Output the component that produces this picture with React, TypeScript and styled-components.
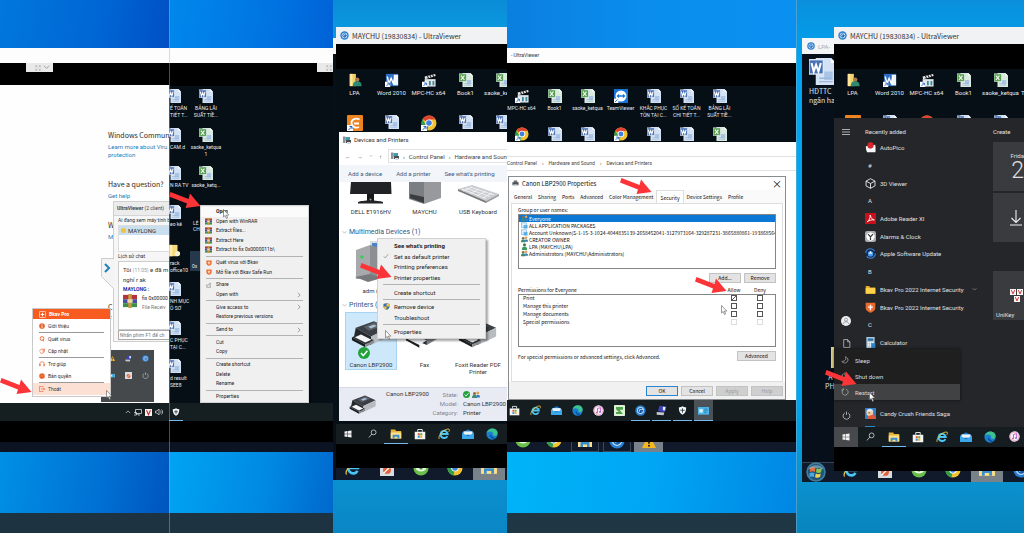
import React from 'react';
import styled, { createGlobalStyle, css } from 'styled-components';

const ui = 'Roboto, "Noto Sans", sans-serif';
const narrow = '"Noto Sans CJK JP", "Liberation Sans", sans-serif';

const Global = createGlobalStyle`
  *, *::before, *::after { box-sizing: border-box; }
  body { margin: 0; background: #0a86d0; font-family: ${ui}; font-size: 5px; line-height: 7px; }
  button, input { font: inherit; color: inherit; margin: 0; }
  button { border: 0; padding: 0; background: none; text-align: left; }
  a { color: inherit; text-decoration: none; }
  h2, h3, p, ul { margin: 0; padding: 0; font-weight: 400; font-size: inherit; list-style: none; }
  svg { display: block; flex: none; }
`;

/* ---------- icons ---------- */

const Sheet = ({ mark, color, tint }: { mark: string; color: string; tint: string }) => (
  <>
    <path d="M4 0h9l3 3v13H4z" fill={tint} />
    <path d="M13 0v3h3z" fill="#fff" />
    <path d="M9 8h5v5H9z" fill="#a9c4e4" /><path d="M6 12h7M6 14h8" stroke="#9cb8dc" strokeWidth=".8" />
    <rect x="0" y="1" width="8.500" height="8.500" fill={color} stroke="#dfe9f5" strokeWidth=".8" />
    <path d={mark} stroke="#fff" strokeWidth="1.200" fill="none" />
  </>
);
const W = 'M1.500 3l1.300 5L4.200 4l1.400 4L7 3';
const X = 'M2.200 3l4 5M6.200 3l-4 5';

const shapes: Record<string, React.ReactNode> = {
  word: <Sheet mark={W} color="#4a72b4" tint="#d3e2f4" />,
  excel: <Sheet mark={X} color="#55a04c" tint="#d9ebdf" />,
  wordApp: (
    <>
      <rect x="1" y="1" width="14" height="14" fill="#2d6cc0" />
      <rect x="10" y="2" width="5" height="12" fill="#eef4fb" />
      <path d="M2.500 4l2 8L7 6l2.500 6 2-8" stroke="#fff" strokeWidth="1.600" fill="none" />
      <path d="M0 10h6v6H0z" fill="#fff" /><path d="M1.500 15l3-3M2.500 11.500h2.500V14" stroke="#2060c0" fill="none" />
    </>
  ),
  clapper: (
    <>
      <path d="M3 4l12-3 .6 2.500L3.500 7z" fill="#e8e8e8" />
      <path d="M6 3l1.500 3M9 2.300l1.500 3M12 1.500l1.500 3" stroke="#222" strokeWidth="1.200" />
      <rect x="3" y="7" width="12.500" height="8.500" fill="#dfe5e8" />
      <path d="M8 9h2v5H8zM12 9h2v5h-2z" fill="#3f8a95" />
      <path d="M0 10h6v6H0z" fill="#fff" /><path d="M1.500 15l3-3M2.500 11.500h2.500V14" stroke="#2060c0" fill="none" />
    </>
  ),
  person: (
    <>
      <path d="M2 1h7v14H2z" fill="#f2d269" /><path d="M2 1h3v14H2z" fill="#ffe79a" />
      <circle cx="10.500" cy="7.500" r="2.500" fill="#b07a50" />
      <path d="M5.500 15c0-4 2-5.500 5-5.500s5 1.500 5 5.500z" fill="#2f8a72" />
    </>
  ),
  chrome: (
    <>
      <circle cx="8" cy="8" r="7.500" fill="#f2c230" />
      <path d="M8 8L1.500 4.200A7.500 7.500 0 0 1 14.600 4.500H8z" fill="#dd4434" />
      <path d="M8 8l-1.500 7.400A7.500 7.500 0 0 1 1.500 4.200L5 10z" fill="#2f9e4f" />
      <circle cx="8" cy="8" r="3.600" fill="#fff" /><circle cx="8" cy="8" r="2.800" fill="#3f7fe0" />
    </>
  ),
  chromeLink: (
    <>
      <circle cx="8" cy="8" r="7.500" fill="#f2c230" />
      <path d="M8 8L1.500 4.200A7.500 7.500 0 0 1 14.600 4.500H8z" fill="#dd4434" />
      <path d="M8 8l-1.500 7.400A7.500 7.500 0 0 1 1.500 4.200L5 10z" fill="#2f9e4f" />
      <circle cx="8" cy="8" r="3.600" fill="#fff" /><circle cx="8" cy="8" r="2.800" fill="#3f7fe0" />
      <path d="M0 10h6v6H0z" fill="#fff" /><path d="M1.500 15l3-3M2.500 11.500h2.500V14" stroke="#2060c0" fill="none" />
    </>
  ),
  foxit: (
    <>
      <rect x="0" y="0" width="16" height="16" rx="1" fill="#ee8420" />
      <path d="M12.500 4.500C8 2 4 5 4.500 8.500S9 13.500 12 12M7 8.500h5" stroke="#fff" strokeWidth="1.800" fill="none" />
      <path d="M0 10h6v6H0z" fill="#fff" /><path d="M1.500 15l3-3M2.500 11.500h2.500V14" stroke="#2060c0" fill="none" />
    </>
  ),
  team: (
    <>
      <rect width="16" height="16" fill="#1674d8" /><circle cx="8" cy="8" r="6.300" fill="#fff" />
      <path d="M2.800 8l3-2.500v1.700h4.400V5.500l3 2.500-3 2.500V8.800H5.800v1.700z" fill="#1674d8" />
      <path d="M0 11h5v5H0z" fill="#fff" /><path d="M1 15l3-3" stroke="#2060c0" />
    </>
  ),
  ultra: (
    <>
      <circle cx="8" cy="8" r="7.500" fill="#2a7fd0" /><circle cx="8" cy="8" r="5" fill="#bfe0fa" />
      <path d="M10.500 6.200a3 3 0 1 0 0 3.600H8V8h4" stroke="#1658a8" strokeWidth="1.500" fill="none" />
    </>
  ),
  folder: (
    <><path d="M1 3h5l1.500 2H15v9H1z" fill="#e5ac2b" /><path d="M1 6h14v8H1z" fill="#ffd24a" /></>
  ),
  yellow: (
    <><path d="M2 1h10v13H2z" fill="#f5da7e" /><path d="M2 1h4v13H2z" fill="#ffeeb0" /><circle cx="12" cy="11" r="3" fill="#f7f0d8" /></>
  ),
  explorer: (
    <>
      <path d="M1 2h6l1 2h7v10H1z" fill="#e9b33a" /><path d="M1 6h14v8H1z" fill="#ffe08a" />
      <path d="M3.500 14v-5h9v5h-2.500v-2.500H6V14z" fill="#3b8ecb" />
    </>
  ),
  store: (
    <>
      <path d="M1 5h14v10H1z" fill="#f4f4f4" /><path d="M5 5V2h6v3" stroke="#f4f4f4" strokeWidth="1.200" fill="none" />
      <path d="M5 7h2.700v2.700H5z" fill="#e8502a" /><path d="M8.300 7H11v2.700H8.300z" fill="#6aac2a" />
      <path d="M5 10.300h2.700V13H5z" fill="#2b94d8" /><path d="M8.300 10.300H11V13H8.300z" fill="#f0b020" />
    </>
  ),
  ie: (
    <>
      <path d="M12.500 10.800A4.800 4.800 0 1 1 13 8H4" stroke="#4cc4f2" strokeWidth="2.600" fill="none" />
      <path d="M1.500 14.500C-1 10 11-1 15 1.800c.8.800-.1 2.500-.8 3.400" stroke="#f5c842" strokeWidth="1.200" fill="none" />
    </>
  ),
  mail: (
    <><path d="M0 6l8-4.500L16 6v8.500H0z" fill="#1a6fc0" /><path d="M2 4.500h12V9H2z" fill="#e8f4fc" /><path d="M0 6.500l8 4.500 8-4.500v8H0z" fill="#39a9ea" /></>
  ),
  edge: (
    <>
      <circle cx="8" cy="8" r="7.500" fill="#1b7fd0" />
      <path d="M1 6.500C2 2.500 5 .5 8.500.5c4.500 0 7 3 7 6 0 2.500-2 3.800-4 3.800-1.500 0-2.500-.6-2-1.600C10.500 7 8 4.800 5.500 4.800 3 4.800 1.500 6 1 6.500z" fill="#3cc48e" />
      <path d="M6 9c0 3 2.500 5 5.500 4.700" stroke="#0c4f9c" strokeWidth="2" fill="none" />
    </>
  ),
  itunes: (
    <><circle cx="8" cy="8" r="7.500" fill="#f3eef6" /><circle cx="8" cy="8" r="6.500" fill="none" stroke="#e58ab8" /><path d="M6.500 11V5l4.500-1v6" stroke="#c04ac0" strokeWidth="1.200" fill="none" /><circle cx="5.700" cy="11" r="1.300" fill="#e0507a" /><circle cx="10.200" cy="10" r="1.300" fill="#7a5ae0" /></>
  ),
  cut: (
    <><rect width="16" height="16" rx="1" fill="#dff0d8" /><path d="M3 3h10v4H8l5 6H3v-3h4L3 6z" fill="#4d9f4a" /></>
  ),
  laptop: (
    <><path d="M5 1l10 1-2 8-10-1z" fill="#3a44c0" /><path d="M10 2.500l4 .5-1 5-3-.4z" fill="#e8ecff" /><path d="M1 10l11 1-1 4-10-1z" fill="#c4c8d0" /></>
  ),
  shieldWhite: (
    <><path d="M8 .5c2 1.400 4 2 6.500 2C14.500 9 13 13 8 15.500 3 13 1.500 9 1.500 2.500c2.500 0 4.500-.6 6.500-2z" fill="#f4f6f8" /><path d="M8 4v8M4 7.500h8" stroke="#26343c" strokeWidth="1.500" /></>
  ),
  shieldOrange: (
    <><path d="M1 1h14v8c0 3-4 5.500-7 6.500C5 14.500 1 12 1 9z" fill="#ee6a2c" /><path d="M8 4v8M4.500 7.500h7" stroke="#fff" strokeWidth="2" /></>
  ),
  card: (
    <><rect x="0" y="3" width="16" height="11" fill="#4fb8ea" /><path d="M2 6h5v5H2z" fill="#d6f0fc" /><path d="M9 6h5M9 8.500h5M9 11h3" stroke="#1b6d9c" /></>
  ),
  coccoc: (
    <><circle cx="8" cy="8" r="7.500" fill="#6abf4b" /><ellipse cx="8" cy="8.500" rx="5" ry="3" fill="#e9f6df" /><circle cx="8" cy="8" r="1.600" fill="#3c8a2a" /></>
  ),
  snip: (
    <><rect width="16" height="16" fill="#d8dce0" /><circle cx="8" cy="9" r="4.500" fill="#e2613a" /><path d="M4 13l8-8" stroke="#fff" strokeWidth="1.500" /></>
  ),
  warn: (
    <><path d="M8 0l8 16H0z" fill="#f5b820" /><path d="M8 5v6" stroke="#222" strokeWidth="2" /><circle cx="8" cy="13.500" r="1.200" fill="#222" /></>
  ),
  windows: <path d="M1 3l6-1v5.500H1zM8 1.800L15 1v6.500H8zM1 8.500h6V14l-6-1zM8 8.500h7V15l-7-.8z" fill="#f2f2f2" />,
  search: <><circle cx="10" cy="6" r="4.300" fill="none" stroke="#d8dcde" strokeWidth="1.400" /><path d="M7 9l-5.500 6" stroke="#d8dcde" strokeWidth="1.400" /></>,
  winrar: (
    <>
      <rect x="0" y="1" width="16" height="5" fill="#b5343c" /><rect x="0" y="6" width="16" height="4.500" fill="#4450a4" />
      <rect x="0" y="10.500" width="16" height="4.500" fill="#3f8f4a" /><rect x="6" y="0" width="4" height="16" fill="#c79a44" /><rect x="5" y="6" width="6" height="4" fill="#efd9a0" />
    </>
  ),
  share: <path d="M2 6v8h10V9M5 10c0-4 3-5 7-5M9.500 2L13 5 9.500 8" stroke="#555" strokeWidth="1.200" fill="none" />,
  uac: (
    <><path d="M8 0l7 2v6c0 4-4 7-7 8-3-1-7-4-7-8V2z" fill="#2f6fcb" /><path d="M8 0l7 2v6H8zM1 8h7v8c-3-1-7-4-7-8z" fill="#f2c437" /></>
  ),
  printerSmall: (
    <><path d="M4 1h8v5H4z" fill="#6b7075" /><path d="M1 5h14v7H1z" fill="#4a4f55" /><path d="M3 10h10v4H3z" fill="#cfd6dc" /></>
  ),
  devices: (
    <><path d="M0 1h5v13H0z" fill="#8b9299" /><path d="M5 2h9v7H5z" fill="#3f9cb0" /><path d="M6 8h10v6H6z" fill="#4a4f55" /><path d="M8 12h7v4H8z" fill="#d5dce2" /></>
  ),
  group: (
    <>
      <circle cx="5" cy="5" r="3" fill="#8c6b42" /><path d="M0 14c0-5 2-6 5-6s5 1 5 6z" fill="#3c8d6c" />
      <circle cx="11.500" cy="4" r="3" fill="#d6a25c" /><path d="M8 13c0-4 1-5 4-5s4 1 4 5z" fill="#3b7cc0" />
    </>
  ),
  user: <><circle cx="8" cy="4" r="3.500" fill="#4c6f48" /><path d="M2 16c0-6 2-8 6-8s6 2 6 8z" fill="#3c9a5c" /></>,
  pkg: <><rect x="1" y="2" width="12" height="10" fill="#dff0fb" stroke="#3c8fd0" /><path d="M6 7h9v8H6z" fill="#5ab0e6" /></>,
  autopico: <><path d="M1 6l14-2v10H3z" fill="#eceff0" /><circle cx="8" cy="5" r="4.500" fill="#d8242c" /><path d="M1 8l7 3 7-5v9H3z" fill="#fafafa" /></>,
  cube: <path d="M8 1l6.500 3.500v7L8 15l-6.500-3.500v-7zM1.500 4.500L8 8l6.500-3.500M8 8v7" fill="none" stroke="#eee" strokeWidth="1.300" />,
  adobe: <><rect width="16" height="16" fill="#c8101c" /><path d="M3 13c3-2 5-6 4.500-10 1.500 5 3 6.500 6 7-4-.5-8 1-10.500 3z" fill="none" stroke="#fff" strokeWidth="1.300" /></>,
  clock: <><rect width="16" height="16" rx="3" fill="#a9adb0" /><circle cx="8" cy="8" r="6" fill="#fff" /><path d="M8 9V13M8 8.500L4.500 4.500M8 8.500l3.500-4" stroke="#333" strokeWidth="1.700" /></>,
  apple: <><circle cx="8" cy="8" r="7" fill="#102850" stroke="#3f86d8" strokeWidth="1.600" strokeDasharray="17 5" /><circle cx="8" cy="8.500" r="4" fill="#4a9ce8" /><path d="M8 4.500l2.500 4h-5z" fill="#e8f4ff" /></>,
  calc: <><rect x="2" y="0" width="12" height="16" fill="#aecbe0" /><rect x="4" y="2" width="8" height="3.500" fill="#2f6fa0" /><path d="M4 8h8M4 10.500h8M4 13h8" stroke="#fff" strokeWidth="1.300" strokeDasharray="2 1" /><rect x="9" y="9" width="6" height="7" fill="#2d86c8" /></>,
  candy: <><rect width="16" height="16" fill="#2f7fc4" /><circle cx="7" cy="7" r="5" fill="#f4c6a0" /><path d="M2 5c1-5 9-5 10 0z" fill="#e4e8f0" /><path d="M4 12l9-3 3 7H3z" fill="#e05a3a" /><circle cx="6" cy="7" r="1" fill="#333" /></>,
  doc: <path d="M3 1h7l4 4v10H3zM10 1v4h4" fill="none" stroke="#d6d6d6" strokeWidth="1.200" />,
  power: <path d="M5 3.500a6 6 0 1 0 6 0M8 1v6" fill="none" stroke="#d8d8d8" strokeWidth="1.300" />,
  restart: <path d="M4.500 3.500a6 6 0 1 0 5-1.200M4.500 0v4h-4" fill="none" stroke="#c8c8c8" strokeWidth="1.200" />,
  moon: <path d="M8.500 1.500c3 5 0 9-7 9.500 4 5 12 3 12.500-3C14 5 12 2.500 8.500 1.500z" fill="none" stroke="#c8c8c8" strokeWidth="1.200" />,
  avatar: <><circle cx="8" cy="8" r="8" fill="#eceeef" /><circle cx="8" cy="6" r="2.500" fill="none" stroke="#777" /><path d="M3.500 13c0-5 9-5 9 0" fill="none" stroke="#777" /></>,
  chevDown: <path d="M2 4l6 6 6-6" fill="none" stroke="#9a9a9a" strokeWidth="2" />,
  chevUp: <path d="M2 11l6-6 6 6" fill="none" stroke="#e0e4e6" strokeWidth="1.800" />,
  chevRight: <path d="M5 2l6 6-6 6" fill="none" stroke="#777" strokeWidth="1.800" />,
  expand: <path d="M2 2l4 4M14 2l-4 4M2 14l4-4M14 14l-4-4M2 6V2h4M10 2h4v4M2 10v4h4M10 14h4v-4" fill="none" stroke="#a4a4a4" strokeWidth="1.500" />,
  net: <path d="M3 3h12v8H3zM0 9h5v5H0M8 11v3h4" fill="none" stroke="#e0e4e6" strokeWidth="1.500" />,
  unikey: <><rect width="16" height="16" fill="#f5f5f5" /><path d="M3.500 3l4.500 10 4.500-10" fill="none" stroke="#cc2020" strokeWidth="2.400" /></>,
  sound: <path d="M1 6h3l4-4v12l-4-4H1zM10.500 5c2 2 2 4 0 6M13 3c3 3 3 7 0 10" fill="none" stroke="#e0e4e6" strokeWidth="1.400" />,
  info: <><circle cx="8" cy="8" r="7.500" fill="#e8622c" /><path d="M8 6.500V13M8 3v2" stroke="#fff" strokeWidth="2.200" /></>,
  scan: <><circle cx="8" cy="6.500" r="5" fill="none" stroke="#e8622c" strokeWidth="2.400" /><path d="M10 10l3 5" stroke="#e8622c" strokeWidth="2.400" /></>,
  update: <><path d="M2 9c-.5-6 8-8 11-4l1-3v6H9M14 8c0 6-8 8-11 4" fill="none" stroke="#e8622c" strokeWidth="2" /></>,
  help: <><path d="M2 10V8a6 6 0 0 1 12 0v2" fill="none" stroke="#e8622c" strokeWidth="1.800" /><path d="M1 8h3v6H1zM12 8h3v6h-3z" fill="#e8622c" /></>,
  seal: <><circle cx="8" cy="8" r="7" fill="#e8622c" stroke="#e8622c" strokeWidth="2" strokeDasharray="2 1.500" /><path d="M4 8h8" stroke="#f6b090" /></>,
  exit: <><path d="M11 3V1H1v14h10v-2" fill="none" stroke="#e8622c" strokeWidth="1.800" /><path d="M5 8h10M12 5l3 3-3 3" fill="none" stroke="#e8622c" strokeWidth="1.800" /></>,
  bkav: <><rect x="1" y="1" width="14" height="14" rx="2" fill="none" stroke="#fff" strokeWidth="1.500" /><path d="M8 4v8M4 8h8" stroke="#fff" strokeWidth="2.200" /></>,
  orb: (
    <>
      <circle cx="8" cy="8" r="7.800" fill="#3f7f9c" /><circle cx="8" cy="8" r="6.500" fill="#1d5578" />
      <path d="M3.500 4.800c1.500-.9 2.700-.8 4-.1L7 8c-1.300-.7-2.500-.7-4 .1z" fill="#e8693a" /><path d="M8.500 5c1.500.7 2.700.7 4.200-.1L12 8.200c-1.400.7-2.600.7-4 0z" fill="#8cc64c" />
      <path d="M2.800 9c1.500-.8 2.700-.8 4-.1l-.6 3.200c-1.200-.6-2.300-.5-3.400 0z" fill="#4aa8e4" /><path d="M7.800 9.200c1.400.7 2.600.7 4 0L11.200 12c-1.400.8-2.600.7-4 .1z" fill="#f6cf4a" />
      <path d="M2 6C3 1.500 13 1.500 14 6 10 4.500 6 4.500 2 6z" fill="#fff" opacity=".35" />
    </>
  ),
  check: <><circle cx="8" cy="8" r="8" fill="#23a23c" /><path d="M4 8l3 3.500L12.500 5" stroke="#fff" strokeWidth="2" fill="none" /></>,
  tick: <path d="M2 9l4 4 8-10" stroke="#555" strokeWidth="1.300" fill="none" />,
  down: <path d="M8 0v12M3.500 8L8 12.500 12.500 8M2 15h12" fill="none" stroke="#f0f0f0" strokeWidth="1.100" />,
};

const Icon = ({ name, size = 14 }: { name: string; size?: number }) => (
  <svg width={size} height={size} viewBox="0 0 16 16" aria-hidden="true">{shapes[name]}</svg>
);

const Printer = ({ size = 42 }: { size?: number }) => (
  <svg width={size} height={size * 0.75} viewBox="0 0 42 31" aria-hidden="true">
    <path d="M5 9L24 2l16 7-19 9z" fill="#3c4044" />
    <path d="M13 8l12-5 7 4-13 5z" fill="#596068" /><path d="M18 8l6-2.500 3 1.700-6 2.500z" fill="#a8c0d4" />
    <path d="M5 9l16 9v9L3 19z" fill="#26292c" /><path d="M21 18l19-9v9l-19 9z" fill="#b8bcc0" />
    <path d="M1 19l9-4 14 7-9 4.500z" fill="#2c2f33" /><path d="M4 19l6.500-3 11 5.500-6.500 3z" fill="#f4f6f8" />
    <path d="M1 19l14 7.500v3L1 22z" fill="#1c1e20" /><path d="M15 26.500l9-4.500v3l-9 4.500z" fill="#8a8e92" />
  </svg>
);
const Fax = () => (
  <svg width="40" height="30" viewBox="0 0 42 31" aria-hidden="true">
    <path d="M6 12L22 4l15 5-14 10z" fill="#3a3d42" /><path d="M24 5l12-4 5 12-8 8-4-3z" fill="#24272b" />
    <path d="M27 7l7-2 3 7-5 5z" fill="#596068" /><path d="M6 12l17 7v8L5 20z" fill="#2a2d31" />
    <path d="M23 19l10-6v8l-10 6z" fill="#7d8186" /><path d="M1 20l8-4 14 6-8 5z" fill="#eef1f4" /><path d="M1 20l14 7v3L1 22z" fill="#1c1e20" />
  </svg>
);
const Monitor = () => (
  <svg width="42" height="22" viewBox="0 0 42 22" aria-hidden="true">
    <path d="M1 0h40l.5 12H0z" fill="#202225" /><path d="M17 12h7v7h-7z" fill="#17181a" />
    <path d="M8 20c4-2 20-2 25 0v1.500H8z" fill="#222427" /><circle cx="20.500" cy="17.500" r="1" fill="#999" />
  </svg>
);
const Tower = () => (
  <svg width="32" height="22" viewBox="0 0 32 22" aria-hidden="true">
    <path d="M0 0h15v22L0 17z" fill="#7b7e82" /><path d="M15 0h17v16l-17 6z" fill="#97999d" /><path d="M1 12l14 3v6L1 16z" fill="#3a3c3f" />
  </svg>
);
const Keyboard = () => (
  <svg width="43" height="22" viewBox="0 -2 43 22" aria-hidden="true">
    <path d="M1 5l14-4 27 9-13 7z" fill="#c9cccf" /><path d="M1 5l28 12v2L1 7z" fill="#77797c" /><path d="M29 17l13-7v2l-13 7z" fill="#9c9ea0" />
    <path d="M5 5l24 9.500M9 4l24 8.700M13 3l24 8M6 7l9-4M13 9.500L22 5M20 12l9-5M26 14l9-5" stroke="#f2f3f4" strokeWidth=".9" />
  </svg>
);
const Server = () => (
  <svg width="34" height="44" viewBox="0 0 34 42" aria-hidden="true">
    <path d="M16 1h14v24H16z" fill="#d8dde2" /><path d="M18 3h7v9h-7zM26 3h6v9h-6z" fill="#4b83c4" />
    <path d="M2 10l14-5v34H2z" fill="#a7a9ac" /><path d="M16 5l10 3v30l-10 2z" fill="#8c8e91" />
    <path d="M1 37l15-3 12 4-14 4z" fill="#77797c" /><circle cx="8" cy="17" r="1.800" fill="#34d058" />
  </svg>
);

const ArrowSvg = styled.svg<{ $x: number; $y: number }>`
  position: absolute; left: ${p => p.$x}px; top: ${p => p.$y}px; z-index: 5;
`;
const Arrow = ({ x, y }: { x: number; y: number }) => (
  <ArrowSvg $x={x} $y={y} width="32" height="18" viewBox="0 0 32 18" aria-hidden="true">
    <path d="M1.500 0l18 7 1.500-5.500 10.500 12.500-15 2 1.500-4.500L0 4.500z" fill="#fb3438" />
  </ArrowSvg>
);
const Cursor = ({ x, y }: { x: number; y: number }) => (
  <ArrowSvg $x={x} $y={y} width="7" height="10" viewBox="0 0 7 10" aria-hidden="true">
    <path d="M.5.5v7.500l1.700-1.600 1.200 3 1.200-.5-1.200-2.800h2.400z" fill="#fff" stroke="#555" strokeWidth=".6" />
  </ArrowSvg>
);

/* ---------- frame of the collage ---------- */

const Collage = styled.main`
  display: grid; grid-template-columns: 169fr 164fr 174fr 289fr 228fr;
  min-height: 100vh; overflow: hidden;
`;
const Shot = styled.section<{ $bg?: string }>`
  position: relative; display: flex; flex-direction: column; min-width: 0; overflow: hidden;
  background: ${p => p.$bg || '#000'};
`;
const Band = styled.div<{ $h?: number; $bg: string }>`
  position: relative; flex: ${p => (p.$h ? 'none' : 1)}; height: ${p => (p.$h ? p.$h + 'px' : 'auto')};
  background: ${p => p.$bg}; overflow: hidden;
`;
const TitleBand = styled(Band)`
  display: flex; align-items: center; gap: 4px; padding: 0 4px; font-size: 5px; color: #333; white-space: pre;
`;
const DisplayTab = styled.div<{ $x: number }>`
  position: absolute; left: ${p => p.$x}px; top: 0; width: 27px; height: 9px; background: #e9e9e9;
  display: flex; align-items: center; gap: 2px; padding-left: 9px;
`;
const TrayBar = styled.div`
  flex: none; height: 18px; background: #151e20; display: flex; align-items: center; justify-content: flex-end; gap: 3px; padding-right: 6px;
`;
const TaskBar = styled.nav<{ $h?: number }>`
  flex: none; height: ${p => p.$h || 20}px; background: #161d20; display: flex; align-items: stretch;
`;
const TaskButton = styled.button<{ $open?: boolean; $active?: boolean; $wide?: boolean }>`
  ${p => (p.$wide ? css`flex: none; width: 19px;` : css`flex: none; width: 24px;`)}
  && { display: flex; align-items: center; justify-content: center;
  background: ${p => (p.$active ? '#4a5157' : 'transparent')};
  border-bottom: 1px solid ${p => (p.$open ? '#76b9ed' : 'transparent')}; }
`;
const HostStrip = styled.div<{ $h: number; $pitch: number }>`
  flex: none; height: ${p => p.$h}px; background: #101a2b; display: flex; overflow: hidden;
  > span { flex: none; width: ${p => p.$pitch}px; display: flex; align-items: flex-end; justify-content: center; padding-bottom: 4px; }
  > span.open { border: 1px solid #3a4759; border-top: 0; margin: 0 2px; width: ${p => p.$pitch - 3}px; padding-bottom: 2px; }
  > span.lit { background: #7a8289; margin: 0 1px; width: ${p => p.$pitch - 2}px; }
`;

/* ---------- desktop icons ---------- */

const IconRow = styled.div<{ $pitch: number; $x?: number; $y?: number; $large?: boolean }>`
  position: absolute; left: ${p => p.$x || 0}px; top: ${p => p.$y || 0}px; font-size: ${p => (p.$large ? 6 : 5)}px;
  display: grid; grid-auto-flow: column; grid-auto-columns: ${p => p.$pitch}px;
`;
const Shortcut = styled.div`
  display: flex; flex-direction: column; align-items: center; gap: 2px; color: #e9edf0; text-align: center;
  white-space: pre; line-height: 7px;
`;
const Item = ({ icon, label, size = 14 }: { icon?: string; label?: string; size?: number }) => (
  <Shortcut>{icon && <Icon name={icon} size={size} />}{label}</Shortcut>
);
const IconColumn = styled.div<{ $x: number; $cut?: boolean }>`
  position: absolute; top: 3px; left: ${p => p.$x}px; width: 34px;
  display: grid; grid-template-rows: repeat(8, 1fr); height: 309px;
  ${p => p.$cut && css`
    ${Shortcut} { align-items: flex-start; text-align: left; }
    svg { margin-left: -3px; }
  `}
`;

/* ---------- menus ---------- */

const Menu = styled.div<{ $x: number; $y: number; $w: number; $h: number; $gutter: number; $large?: boolean }>`
  position: absolute; left: ${p => p.$x}px; top: ${p => p.$y}px; width: ${p => p.$w}px; height: ${p => p.$h}px;
  font-size: ${p => (p.$large ? 6 : 5)}px;
  display: flex; flex-direction: column; padding: 1px 0; background: #f0f0f0; color: #1c1c1c; z-index: 2;
  border: 1px solid #d2d2d2; box-shadow: 2px 2px 2px rgba(0,0,0,.35);
  button { flex: 3; min-height: 0; display: grid; grid-template-columns: ${p => p.$gutter}px 1fr 12px; align-items: center; white-space: nowrap; }
  button > :first-child { justify-self: center; }
  hr { flex: 1; min-height: 0; width: calc(100% - 10px); margin: 0 5px; border: 0; background: linear-gradient(#b4b4b4, #b4b4b4) center / 100% 1px no-repeat; }
`;
const Hot = styled.span`
  display: contents;
  button { background: #fbfbfb; }
`;
const Entry = ({ icon, label, more, bold, size = 7 }: { icon?: string; label: string; more?: boolean; bold?: boolean; size?: number }) => (
  <button type="button">
    <span>{icon && <Icon name={icon} size={size} />}</span>
    {bold ? <b>{label}</b> : <span>{label}</span>}
    {more && <Icon name="chevRight" size={6} />}
  </button>
);

/* ---------- shot 1: exit Bkav ---------- */

const HelpPage = styled.div`
  padding: 44px 0 0 108px; color: #2b2b2b; font: 7px/12px ${narrow}; white-space: nowrap;
  a { display: block; color: #1b7fb8; font: 6px/8px ${ui}; margin: 2px 0 19px; }
`;
const LowerHelp = styled.div`margin-top: 60px; a { margin: 0; }`;
const ViewerPanel = styled.aside`
  position: absolute; left: 113px; right: 0; top: 116px; height: 141px; background: #f6f6f6; border: solid #cfcfcf; border-width: 1px 0 1px 1px;
  padding-left: 4px; color: #333; white-space: nowrap; overflow: hidden;
  h2 { margin-left: -4px; padding-left: 3px; line-height: 13px; background: #ececec; border-bottom: 1px solid #d5d5d5; color: #444; }
`;
const PanelLabel = styled.p`line-height: 9px;`;
const ClientList = styled.div`
  height: 27px; background: #fff; border: 1px solid #ddd; border-right: 0;
  div { display: flex; align-items: center; gap: 2px; padding-left: 2px; height: 9px; font-size: 6px; background: #c9dff0; }
  i { width: 5px; height: 5px; border-radius: 50%; background: #f0c23a; }
`;
const ChatLog = styled.div`
  height: 69px; background: #fff; border: 1px solid #ccc; border-right: 0; padding: 3px 0 0 4px; font-size: 6px; line-height: 9px;
  small { font-size: 5px; color: #999; } strong { color: #2b2ba0; font-size: 5px; }
`;
const FileLine = styled.div`display: flex; gap: 5px; font-size: 5px; div { color: #777; } p { color: #222; }`;
const ChatInput = styled.input`
  display: block; width: 100%; height: 10px; border: 1px solid #aaa; border-right: 0; border-radius: 0; padding: 0 1px; background: #fff;
  &::placeholder { color: #777; opacity: 1; }
`;
const DrawerTab = styled.button`
  && { position: absolute; left: 101px; top: 173px; z-index: 1; }
`;
const TrayPopup = styled.div`
  position: absolute; left: 101px; top: 265px; width: 53px; height: 52px; background: #46494b; padding: 0 0 18px 3px;
  display: grid; grid-template-columns: repeat(3, 1fr); align-items: center; justify-items: center;
`;
const BkavMenu = styled.div`
  position: absolute; left: 32px; top: 223px; width: 79px; background: #fff; border: 1px solid #c9c9c9; z-index: 2; color: #333; padding-bottom: 1px;
  h2, button { display: flex; align-items: center; gap: 3px; width: 100%; height: 12px; padding-left: 6px; }
  h2 { height: 10px; background: #f75b20; color: #fff; font-weight: 700; margin-bottom: 1px; }
  hr { margin: 0 6px; border: 0; height: 1px; background: #999; }
  button:last-child { background: #fde0d4; }
`;

const ShotOne = () => (
  <Shot>
    <Band $h={48} $bg="linear-gradient(100deg, #0078dc, #0065d4 60%, #0050c4)" />
    <Band $h={15} $bg="#fdfdfd" />
    <Band $h={22} $bg="#000"><DisplayTab $x={26}><Icon name="expand" size={6} /><Icon name="chevDown" size={7} /></DisplayTab></Band>
    <Band $h={318} $bg="#fefefe">
      <HelpPage>
        <p>Windows Community</p><a href="#virus">Learn more about Viru<br />protection</a>
        <p>Have a question?</p><a href="#help">Get help</a>
        <p>W</p><a href="#more">M</a>
        <LowerHelp><p>C</p><p>F</p><a href="#sec">L</a></LowerHelp>
      </HelpPage>
      <DrawerTab type="button" aria-label="Collapse">
        <svg width="13" height="42" viewBox="0 0 13 42"><path d="M13 .5H.5v18L13 31" fill="#f4f4f4" stroke="#ccc" /><path d="M4 6l4 4-4 4" stroke="#1f7fc0" strokeWidth="2" fill="none" /></svg>
      </DrawerTab>
      <ViewerPanel>
        <h2><b>UltraViewer</b> (2 client)</h2>
        <PanelLabel>Ai đang xem máy tính b</PanelLabel>
        <ClientList><div><i />MAYLONG</div></ClientList>
        <PanelLabel>Lịch sử chat</PanelLabel>
        <ChatLog>
          <p>Tôi <small>(11:05)</small> e đã m</p><p>nghỉ r ak</p><strong>MAYLONG :</strong>
          <FileLine><Icon name="winrar" size={14} /><div><p>fix 0x00000</p>File Receiv</div></FileLine>
        </ChatLog>
        <ChatInput aria-label="Chat" placeholder="Nhấn phím F1 để ch" />
      </ViewerPanel>
      <TrayPopup>
        <Icon name="warn" size={5} /><Icon name="laptop" size={7} /><Icon name="ultra" size={7} />
        <Icon name="card" size={5} /><Icon name="snip" size={7} /><Icon name="power" size={7} />
      </TrayPopup>
      <BkavMenu>
        <h2><Icon name="bkav" size={7} />Bkav Pro</h2>
        <button type="button"><Icon name="info" size={6} />Giới thiệu</button><hr />
        <button type="button"><Icon name="scan" size={6} />Quét virus</button>
        <button type="button"><Icon name="update" size={6} />Cập nhật</button><hr />
        <button type="button"><Icon name="help" size={6} />Trợ giúp</button>
        <button type="button"><Icon name="seal" size={6} />Bản quyền</button><hr />
        <button type="button"><Icon name="exit" size={6} />Thoát</button>
      </BkavMenu>
    </Band>
    <TrayBar><Icon name="chevUp" size={6} /><Icon name="net" size={8} /><Icon name="unikey" size={7} /><Icon name="sound" size={8} /></TrayBar>
    <Band $h={21} $bg="#000" />
    <Band $h={10} $bg="#0c1424" />
    <Band $h={61} $bg="linear-gradient(100deg, #0090e4, #0070d4 60%, #0055be)" />
    <Band $bg="#1d3342" />
    <Arrow x={0} y={378} /><Cursor x={106} y={390} />
  </Shot>
);

/* ---------- shot 2: extract ---------- */

const Selected = styled.div`
  position: absolute; left: 21px; top: 165px; width: 40px; height: 20px; background: #26384c; color: #dfe5ea; padding: 12px 0 0 2px;
`;
const Caption = styled.p`position: absolute; left: 24px; top: 134px; color: #dfe5ea; line-height: 6px;`;
const EdgeLine = styled.div`position: absolute; inset: 0 auto 0 0; width: 1px; background: rgba(150,180,205,.45); z-index: 4;`;
const Shield = styled.button`
  && { margin-right: auto; width: 14px; height: 18px; display: flex; align-items: center; justify-content: center; border-bottom: 1px solid #76b9ed; }
`;

const ShotTwo = () => (
  <Shot>
    <EdgeLine />
    <Band $h={48} $bg="linear-gradient(100deg, #0088ec, #0074e2 60%, #0062d6)" />
    <Band $h={15} $bg="#fdfdfd" />
    <Band $h={23} $bg="#000"><DisplayTab $x={148}><Icon name="expand" size={6} /></DisplayTab></Band>
    <Band $h={317} $bg="#060e16">
      <IconColumn $x={1} $cut>
        <Item icon="word" label={'Ế TOÁN\nTIẾT T...'} /><Item icon="word" label="CAM.d" /><Item icon="word" label="N RA TV" />
        <Item icon="word" label="eo kê" /><Item icon="yellow" label={'rack\noffice10'} /><Item icon="word" label={'NH MỤC\nỒ SƠ'} />
        <Item icon="word" label={'C PHỤC\nTẠI C...'} /><Item icon="word" label={'d result\nSEE8'} />
      </IconColumn>
      <IconColumn $x={20}>
        <Item icon="word" label={'BẢNG LÃI\nSUẤT TIỀ...'} /><Item icon="excel" label={'saoke_ketqua\n1'} /><Item icon="excel" label="saoke_ketq..." />
      </IconColumn>
      <Caption>LÊ<br />CH</Caption>
      <Selected>0x</Selected>
      <Menu $x={31} $y={119} $w={109} $h={198} $gutter={15}>
        <Hot><Entry label="Open" bold /></Hot><Entry icon="winrar" label="Open with WinRAR" /><Entry icon="winrar" label="Extract files..." />
        <Entry icon="winrar" label="Extract Here" /><Entry icon="winrar" label="Extract to fix 0x0000011b\" /><hr />
        <Entry icon="shieldOrange" size={6} label="Quét virus với Bkav" /><Entry icon="shieldOrange" size={6} label="Mở file với Bkav Safe Run" /><hr />
        <Entry icon="share" size={6} label="Share" /><Entry label="Open with" more /><hr />
        <Entry label="Give access to" more /><Entry label="Restore previous versions" /><hr />
        <Entry label="Send to" more /><hr />
        <Entry label="Cut" /><Entry label="Copy" /><hr />
        <Entry label="Create shortcut" /><Entry label="Delete" /><Entry label="Rename" /><hr />
        <Entry label="Properties" />
      </Menu>
    </Band>
    <TrayBar><Shield type="button" aria-label="Bkav"><Icon name="shieldWhite" size={8} /></Shield></TrayBar>
    <Band $h={21} $bg="#000" />
    <Band $h={10} $bg="#0c1424" />
    <Band $h={61} $bg="linear-gradient(100deg, #00a4f2, #0088e2 60%, #0068cc)" />
    <Band $bg="#1d3342" />
    <Arrow x={0} y={192} /><Cursor x={54} y={209} />
  </Shot>
);

/* ---------- shared viewer window (shots 3 and 5) ---------- */

const Viewer = styled.div<{ $x: number }>`
  position: relative; margin: 27px 0 0 ${p => p.$x}px; display: flex; flex-direction: column; background: #060e16;
`;
const ViewerTitle = styled.h2`
  && { height: 17px; background: #f1f2f3; display: flex; align-items: center; gap: 3px; padding-left: 4px; color: #333; font: 7px/8px ${narrow}; white-space: nowrap; }
`;
const FirstRow = () => (
  <>
    <Item icon="person" label="LPA" /><Item icon="wordApp" label="Word 2010" /><Item icon="clapper" label="MPC-HC x64" />
    <Item icon="excel" label="Book1" /><Item icon="excel" label="saoke_ketqua" />
  </>
);
const SecondRow = () => (
  <><Item icon="foxit" size={16} /><Item icon="word" /><Item icon="chromeLink" size={16} /><Item icon="word" /><Item icon="word" /></>
);
const BackWindow = styled.div<{ $x: number; $bottom: number }>`
  position: absolute; left: ${p => p.$x}px; top: 38px; right: 0; height: ${p => p.$bottom - 38}px; background: #07101a; color: #dfe5ea;
`;
const BackTitle = styled.div`
  height: 16px; background: #f4f5f6; display: flex; align-items: center; gap: 3px; padding-left: 5px; font-size: 6px; color: #a5a8ab;
`;

/* ---------- shot 3: printers ---------- */

const Explorer = styled.div`
  position: absolute; left: 3px; right: 0; top: 105px; height: 289px; background: #fff; color: #333; white-space: nowrap;
  display: flex; flex-direction: column; font-size: 6px;
`;
const ExTitle = styled.h2`&& { height: 15px; display: flex; align-items: center; gap: 3px; padding-left: 4px; }`;
const Address = styled.nav`
  height: 18px; display: flex; align-items: center; gap: 6px; padding-left: 6px; color: #555;
  > div { flex: 1; height: 14px; display: flex; align-items: center; gap: 4px; border: 1px solid #e3e3e3; border-right: 0; padding-left: 2px; color: #444; overflow: hidden; }
`;
const Commands = styled.div`
  height: 17px; display: flex; align-items: center; gap: 14px; padding-left: 9px; background: #f2f5f9; color: #3d5a80;
`;
const Devices = styled.div<{ $mb?: number }>`
  display: grid; grid-template-columns: 52px 55px 52px; justify-items: center; padding-left: 6px; text-align: center; white-space: pre;
  margin-bottom: ${p => p.$mb || 0}px;
`;
const Device = styled.button<{ $sel?: boolean; $h: number }>`
  && { position: relative; width: 100%; height: ${p => p.$h}px; display: flex; flex-direction: column; align-items: center; justify-content: flex-start; gap: 4px; text-align: center; white-space: pre;
  background: ${p => (p.$sel ? '#cce8fa' : 'none')}; box-shadow: ${p => (p.$sel ? 'inset 0 0 0 1px #a8d4f2' : 'none')}; padding-top: ${p => (p.$h > 55 ? 7 : 0)}px; }
`;
const DeviceBadge = styled.span`position: absolute; left: 13px; top: 35px;`;
const PrinterImg = styled.div`flex: none; height: 38px;`;
const GroupTitle = styled.h3`
  && { display: flex; align-items: center; gap: 2px; padding-left: 3px; height: 14px; font-size: 7px; color: #31597f; }
`;
const Details = styled.footer`
  margin-top: auto; height: 34px; background: #e8ebf3; display: flex; padding: 2px 0 0 10px; color: #333; border-top: 1px solid #d6dae4;
  > svg { margin: 4px 9px 0 0; }
  dl { margin: 0 0 0 auto; display: grid; grid-template-columns: auto 44px; grid-auto-rows: 9px; column-gap: 5px; align-items: center; }
  dt { text-align: right; color: #7b8797; } dd { margin: 0; display: flex; gap: 2px; }
`;

const ShotThree = () => (
  <Shot $bg="linear-gradient(180deg, #0a8cd6, #0a9ae0 6%, #0a90d0 90%, #0a86c4)">
    <BackWindow $x={0} $bottom={480}><BackTitle /></BackWindow>
    <Viewer $x={3}>
      <ViewerTitle><Icon name="ultra" size={9} />MAYCHU (19830834) - UltraViewer</ViewerTitle>
      <Band $h={25} $bg="#000" />
      <Band $h={355} $bg="#060e16">
        <IconRow $x={0} $y={4} $pitch={37} $large><FirstRow /></IconRow>
        <IconRow $x={0} $y={46} $pitch={37}><SecondRow /></IconRow>
      </Band>
      <Explorer>
        <ExTitle><Icon name="devices" size={8} />Devices and Printers</ExTitle>
        <Address>
          <span>←</span><span>→</span><Icon name="chevDown" size={4} /><span>↑</span>
          <div><Icon name="devices" size={8} /><span>›</span><a href="#cp">Control Panel</a><span>›</span><a href="#hs">Hardware and Soun</a></div>
        </Address>
        <Commands><button type="button">Add a device</button><button type="button">Add a printer</button><button type="button">See what's printing</button></Commands>
        <Devices $mb={-1}>
          <Device type="button" $h={44}><Monitor />DELL E1916HV</Device>
          <Device type="button" $h={44}><Tower />MAYCHU</Device>
          <Device type="button" $h={44}><Keyboard />USB Keyboard</Device>
        </Devices>
        <GroupTitle><Icon name="chevDown" size={5} />Multimedia Devices (1)</GroupTitle>
        <Devices $mb={5}><Device type="button" $h={54}><Server />adm (l</Device></Devices>
        <GroupTitle><Icon name="chevDown" size={5} />Printers (</GroupTitle>
        <Devices>
          <Device type="button" $sel $h={58}><PrinterImg><Printer size={40} /></PrinterImg>Canon LBP2900<DeviceBadge><Icon name="check" size={12} /></DeviceBadge></Device>
          <Device type="button" $h={58}><PrinterImg><Fax /></PrinterImg>Fax</Device>
          <Device type="button" $h={58}><PrinterImg><Printer size={40} /></PrinterImg>{'Foxit Reader PDF\nPrinter'}</Device>
        </Devices>
        <Details>
          <Printer size={28} />
          <span>Canon LBP2900</span>
          <dl><dt>State:</dt><dd><Icon name="check" size={7} /><Icon name="group" size={8} /></dd><dt>Model:</dt><dd>Canon LBP2900</dd><dt>Category:</dt><dd>Printer</dd></dl>
        </Details>
      </Explorer>
      <TaskBar>
        <TaskButton type="button" aria-label="Start"><Icon name="windows" size={8} /></TaskButton><TaskButton type="button" aria-label="Search"><Icon name="search" size={9} /></TaskButton>
        <TaskButton type="button" aria-label="Explorer" $open><Icon name="explorer" size={12} /></TaskButton><TaskButton type="button" aria-label="Store"><Icon name="store" size={12} /></TaskButton>
        <TaskButton type="button" aria-label="Internet"><Icon name="ie" size={12} /></TaskButton><TaskButton type="button" aria-label="Mail"><Icon name="mail" size={12} /></TaskButton>
        <TaskButton type="button" aria-label="Edge"><Icon name="edge" size={12} /></TaskButton>
      </TaskBar>
      <Band $h={24} $bg="#000" />
      <HostStrip $h={12} $pitch={34}><span><Icon name="ie" size={16} /></span><span><Icon name="snip" size={14} /></span><span><Icon name="coccoc" size={16} /></span><span><Icon name="chrome" size={16} /></span><span className="lit"><Icon name="explorer" size={18} /></span></HostStrip>
    </Viewer>
    <Menu $x={44} $y={238} $w={109} $h={101} $gutter={16} $large>
      <Entry label="See what's printing" bold />
      <Entry icon="tick" size={6} label="Set as default printer" />
      <Entry label="Printing preferences" /><Entry label="Printer properties" /><hr />
      <Entry label="Create shortcut" /><hr />
      <Entry icon="uac" label="Remove device" /><Entry label="Troubleshoot" /><hr />
      <Entry label="Properties" />
    </Menu>
    <Arrow x={27} y={263} /><Cursor x={52} y={330} />
  </Shot>
);

/* ---------- shot 4: printer security ---------- */

const Crumbs = styled.nav`
  height: 15px; margin-top: 14px; border: solid #e2e2e2; border-width: 1px 0; display: flex; align-items: center; gap: 5px; color: #444;
`;
const Backdrop = styled.div`position: absolute; inset: 56px 0 0 0; background: #fff; white-space: nowrap;`;
const Dialog = styled.form`
  position: absolute; left: 1px; right: 10px; top: 90px; background: #fff; border: 1px solid #8a8d90; font-family: ${narrow}; font-size: 5px; color: #111; white-space: nowrap;
`;
const DialogTitle = styled.header`
  display: flex; align-items: center; gap: 3px; height: 13px; padding: 0 3px; font-family: ${narrow}; font-size: 6px;
  button { margin-left: auto; font-size: 10px; }
`;
const Tabs = styled.div`display: flex; height: 13px; padding-left: 2px; background: #fafafa;`;
const Tab = styled.button<{ $on?: boolean }>`
  && { padding: 0 3px; border: 0 solid #ddd; background: ${p => (p.$on ? '#fff' : 'none')}; ${p => p.$on && css`border-width: 1px 1px 0;`} }
`;
const Page = styled.div`margin: 0 2px; border: 1px solid #dedede; padding: 2px 6px 18px; height: 179px;`;
const Names = styled.ul`
  && { height: 55px; border: 1px solid #858585; margin-top: 1px; overflow: hidden; }
`;
const Name = styled.li<{ $on?: boolean }>`
  display: flex; align-items: center; gap: 1px; height: 7px; padding-left: 2px;
  background: ${p => (p.$on ? '#0a78d4' : 'none')}; color: ${p => (p.$on ? '#fff' : 'inherit')};
`;
const Actions = styled.div<{ $top: number }>`display: flex; justify-content: flex-end; align-items: center; gap: 3px; margin-top: ${p => p.$top}px; p { margin-right: auto; }`;
const Push = styled.button<{ $w?: number; $primary?: boolean }>`
  && { width: ${p => p.$w || 32}px; height: 10px; text-align: center; line-height: 8px; background: #e3e3e3; border: 1px solid ${p => (p.$primary ? '#2a84d0' : '#c3c3c3')}; }
  &&:disabled { color: #9c9c9c; background: #cfcfcf; }
`;
const Permissions = styled.table`
  width: 100%; margin-top: 3px; border-collapse: collapse; line-height: 8px;
  th, td { padding: 0; font-weight: 400; text-align: center; height: 8px; width: 26px; }
  th:first-child, td:first-child { text-align: left; width: auto; padding-left: 5px; } thead th:first-child { padding-left: 0; }
  th:last-child, td:last-child { width: 29px; padding-right: 3px; }
  tbody { outline: 1px solid #858585; outline-offset: -1px; }
  input { appearance: none; display: block; margin: 0 auto; width: 6px; height: 6px; border: 1px solid #555; background: #fff; }
  input:checked { background: linear-gradient(135deg, #fff 40%, #555 50%, #fff 60%); }
  input:disabled { border-color: #ddd; }
  tr.fill td { height: 21px; }
`;
const DialogFooter = styled.footer`height: 17px; display: flex; align-items: center; justify-content: flex-end; gap: 3px; padding-right: 2px; background: #f1f1f1;`;
const WideTasks = styled(TaskBar)`
  gap: 2px; padding-left: 0;
  button:first-child { margin-left: -2px; }
`;

const people: [string, string][] = [
  ['group', 'Everyone'], ['pkg', 'ALL APPLICATION PACKAGES'],
  ['pkg', 'Account Unknown(S-1-15-3-1024-4044835139-2658452041-3127973164-329287231-3865880861-1938685643-4610...'],
  ['group', 'CREATOR OWNER'], ['user', 'LPA (MAYCHU\\LPA)'], ['group', 'Administrators (MAYCHU\\Administrators)'],
];

const ShotFour = () => (
  <Shot>
    <Band $h={48} $bg="linear-gradient(90deg, #0a7fe0, #0a8eee 50%, #0a90f0)" />
    <TitleBand $h={15} $bg="#fdfdfd">- UltraViewer</TitleBand>
    <Band $h={23} $bg="#000" />
    <Band $h={314} $bg="#060e16">
      <IconRow $x={-2} $y={3} $pitch={33}>
        <Item icon="clapper" label="MPC-HC x64" /><Item icon="excel" label="Book1" /><Item icon="excel" label="saoke_ketqua" /><Item icon="team" label="TeamViewer" />
        <Item icon="word" label={'KHẮC PHỤC\nTỒN TẠI C...'} /><Item icon="word" label={'SỔ KẾ TOÁN\nCHI TIẾT T...'} /><Item icon="word" label={'BẢNG LÃI\nSUẤT TIỀ...'} />
      </IconRow>
      <IconRow $x={-2} $y={41} $pitch={33}>
        <Item icon="chromeLink" /><Item icon="word" /><Item icon="word" /><Item icon="chromeLink" /><Item icon="word" /><Item icon="word" /><Item icon="excel" />
      </IconRow>
      <Backdrop>
        <Crumbs><a href="#cp">Control Panel</a><span>›</span><a href="#hs">Hardware and Sound</a><span>›</span><a href="#dp">Devices and Printers</a></Crumbs>
      </Backdrop>
      <Dialog>
        <DialogTitle><Icon name="printerSmall" size={7} />Canon LBP2900 Properties<button type="button" aria-label="Close">×</button></DialogTitle>
        <Tabs>
          {['General', 'Sharing', 'Ports', 'Advanced', 'Color Management', 'Security', 'Device Settings', 'Profile'].map(t => (
            <Tab type="button" key={t} $on={t === 'Security'}>{t}</Tab>
          ))}
        </Tabs>
        <Page>
          <p>Group or user names:</p>
          <Names>{people.map(([icon, name], i) => <Name key={name} $on={i === 0}><Icon name={icon} size={7} />{name}</Name>)}</Names>
          <Actions $top={4}><Push type="button">Add...</Push><Push type="button">Remove</Push></Actions>
          <Permissions>
            <thead><tr><th>Permissions for Everyone</th><th>Allow</th><th>Deny</th></tr></thead>
            <tbody>
              {['Print', 'Manage this printer', 'Manage documents', 'Special permissions'].map((p, i) => (
                <tr key={p}><td>{p}</td>
                  <td><input type="checkbox" aria-label={'Allow ' + p} defaultChecked={i === 0} disabled={i === 3} /></td>
                  <td><input type="checkbox" aria-label={'Deny ' + p} disabled={i === 3} /></td></tr>
              ))}
              <tr className="fill"><td colSpan={3} /></tr>
            </tbody>
          </Permissions>
          <Actions $top={4}><p>For special permissions or advanced settings, click Advanced.</p><Push type="button" $w={39}>Advanced</Push></Actions>
        </Page>
        <DialogFooter><Push type="button" $primary>OK</Push><Push type="button">Cancel</Push><Push type="button" disabled>Apply</Push><Push type="button" disabled>Help</Push></DialogFooter>
      </Dialog>
    </Band>
    <WideTasks $h={21}>
      {['store', 'ie', 'mail', 'edge', 'itunes', 'cut', 'ultra', 'laptop', 'shieldWhite', 'card'].map((n, i) => (
        <TaskButton type="button" $wide key={n} aria-label={n} $open={i > 5} $active={i === 9}><Icon name={n} size={n === 'shieldWhite' ? 9 : 11} /></TaskButton>
      ))}
    </WideTasks>
    <Band $h={21} $bg="#000" />
    <HostStrip $h={10} $pitch={31}><span><Icon name="coccoc" size={16} /></span><span><Icon name="chrome" size={16} /></span><span className="open"><Icon name="explorer" size={16} /></span><span className="open"><Icon name="ultra" size={16} /></span><span className="lit"><Icon name="warn" size={14} /></span></HostStrip>
    <Band $h={61} $bg="linear-gradient(100deg, #00b4f8, #00a6f4 50%, #0086e4)" />
    <Band $bg="#1f3644" />
    <Arrow x={113} y={178} /><Arrow x={188} y={277} /><Cursor x={214} y={305} />
  </Shot>
);

/* ---------- shot 5: restart ---------- */

const HostLabels = styled.p<{ $x: number; $y: number }>`
  && { position: absolute; left: ${p => p.$x}px; top: ${p => p.$y}px; font: 7px/9px ${narrow}; white-space: nowrap; }
`;
const WordFile = styled.div`position: absolute; left: 7px; top: 20px;`;
const Orb = styled.button`&& { position: absolute; left: 4px; bottom: 0; }`;
const HostBar = styled.div`position: absolute; left: 0; right: 0; bottom: 0; height: 20px; background: #101a2b; border-top: 1px solid #33455a;`;
const FolderEdge = styled.div`position: absolute; left: 29px; top: 309px; width: 3px; height: 21px; background: #e2d48c;`;
const StartMenu = styled.div`
  position: absolute; left: 0; right: 0; top: 91px; height: 309px; background: #25262a; color: #e0e0e0; font-size: 6px;
  display: grid; grid-template-columns: 24px 1fr 31px; column-gap: 7px;
`;
const Rail = styled.div`
  display: flex; flex-direction: column; align-items: center; padding: 10px 0 7px;
  > :nth-child(2) { margin-top: auto; } > :nth-child(3) { margin: 13px 0 63px; }
`;
const Apps = styled.div`display: flex; flex-direction: column; padding-bottom: 4px; white-space: nowrap; border-bottom: 1px solid #2a86c8; border-image: linear-gradient(90deg, #2a86c8 11px, transparent 11px) 1;`;
const ListHead = styled.h3`&& { height: 21px; padding-top: 10px; line-height: 8px; }`;
const AppRow = styled.button`
  && { flex: 1; display: flex; align-items: center; gap: 4px; } > :nth-child(2) { margin-left: auto; margin-right: 9px; }
`;
const Letter = styled.div`flex: 1; display: flex; align-items: center; padding-left: 3px;`;
const Gap = styled.div`flex: 3;`;
const Tile = styled.button<{ $mt?: number }>`
  && { width: 31px; height: 49px; margin-bottom: 2px; margin-top: ${p => p.$mt || 0}px; background: #3a3b3f; display: flex; flex-direction: column; align-items: flex-end; justify-content: center; position: relative; white-space: nowrap; overflow: hidden; }
`;
const BigDay = styled.span`font-size: 23px; line-height: 23px; font-weight: 300;`;
const TileName = styled.span`position: absolute; left: 3px; bottom: 2px;`;
const KeyCaps = styled.div`display: flex; flex-wrap: wrap; gap: 1px; width: 15px; justify-content: center;`;
const PowerMenu = styled.div`
  position: absolute; left: 38px; top: 349px; width: 126px; padding: 3px 0 0; background: #1f1f20; color: #ddd; box-shadow: 0 0 3px rgba(0,0,0,.6); z-index: 2;
  button { display: flex; align-items: center; gap: 6px; width: 100%; height: 16px; padding-left: 7px; font-size: 6px; }
  button:last-child { background: #414244; }
`;
const StartButton = styled(TaskButton)`&&& { background: #47494c; }`;

const ShotFive = () => (
  <Shot $bg="linear-gradient(180deg, #0a8fdc, #00a4f0 12%, #00a6ee 75%, #0a90cc 92%, #0884bc)">
    <EdgeLine />
    <BackWindow $x={6} $bottom={482}>
      <BackTitle><Icon name="ultra" size={8} />LPA-</BackTitle>
      <WordFile><Icon name="word" size={27} /></WordFile>
      <HostLabels $x={7} $y={49}>HĐTTC<br />ngân ha</HostLabels>
      <FolderEdge />
      <HostLabels $x={23} $y={335}>&nbsp; A<br />PH</HostLabels>
      <HostBar /><Orb type="button" aria-label="Start"><Icon name="orb" size={20} /></Orb>
    </BackWindow>
    <Viewer $x={38}>
      <ViewerTitle><Icon name="ultra" size={9} />MAYCHU (19830834) - UltraViewer</ViewerTitle>
      <Band $h={25} $bg="#000" />
      <Band $h={358} $bg="#060e16">
        <IconRow $x={0} $y={4} $pitch={37} $large><FirstRow /><Item icon="team" label="TeamViewer" /></IconRow>
        <IconRow $x={0} $y={46} $pitch={37}><SecondRow /></IconRow>
      </Band>
      <StartMenu>
        <Rail>
          <svg width="8" height="8" viewBox="0 0 8 8"><path d="M0 1.500h8M0 4h8M0 6.500h8" stroke="#d0d0d0" strokeWidth=".8" /></svg>
          <Icon name="avatar" size={10} /><Icon name="doc" size={9} /><Icon name="power" size={9} />
        </Rail>
        <Apps>
          <ListHead>Recently added</ListHead>
          <AppRow type="button"><Icon name="autopico" size={11} />AutoPico</AppRow>
          <Letter>#</Letter>
          <AppRow type="button"><Icon name="cube" size={11} />3D Viewer</AppRow>
          <Letter>A</Letter>
          <AppRow type="button"><Icon name="adobe" size={11} />Adobe Reader XI</AppRow>
          <AppRow type="button"><Icon name="clock" size={11} />Alarms &amp; Clock</AppRow>
          <AppRow type="button"><Icon name="apple" size={11} />Apple Software Update</AppRow>
          <Letter>B</Letter>
          <AppRow type="button"><Icon name="folder" size={11} />Bkav Pro 2022 Internet Security<Icon name="chevDown" size={5} /></AppRow>
          <AppRow type="button"><Icon name="shieldOrange" size={11} />Bkav Pro 2022 Internet Security</AppRow>
          <Letter>C</Letter>
          <AppRow type="button"><Icon name="calc" size={11} />Calculator</AppRow>
          <Gap />
          <AppRow type="button"><Icon name="candy" size={11} />Candy Crush Friends Saga</AppRow>
        </Apps>
        <div>
          <ListHead>Create</ListHead>
          <Tile type="button" $mt={3}><span>Frida</span><BigDay>2</BigDay></Tile>
          <Tile type="button"><Icon name="down" size={16} /></Tile>
          <Tile type="button" $mt={29}><KeyCaps><Icon name="unikey" size={6} /><Icon name="unikey" size={6} /><Icon name="unikey" size={6} /></KeyCaps><TileName>UniKey</TileName></Tile>
        </div>
      </StartMenu>
      <TaskBar>
        <StartButton type="button" aria-label="Start"><Icon name="windows" size={8} /></StartButton><TaskButton type="button" aria-label="Search"><Icon name="search" size={9} /></TaskButton>
        <TaskButton type="button" aria-label="Explorer" $open><Icon name="explorer" size={12} /></TaskButton><TaskButton type="button" aria-label="Store"><Icon name="store" size={12} /></TaskButton>
        <TaskButton type="button" aria-label="Internet"><Icon name="ie" size={12} /></TaskButton><TaskButton type="button" aria-label="Mail"><Icon name="mail" size={12} /></TaskButton>
        <TaskButton type="button" aria-label="Edge"><Icon name="edge" size={12} /></TaskButton><TaskButton type="button" aria-label="Music"><Icon name="itunes" size={11} /></TaskButton>
      </TaskBar>
      <Band $h={24} $bg="#000" />
      <HostStrip $h={11} $pitch={34}><span><Icon name="ie" size={16} /></span><span><Icon name="snip" size={14} /></span><span><Icon name="coccoc" size={16} /></span><span><Icon name="chrome" size={16} /></span><span className="lit"><Icon name="explorer" size={18} /></span><span><Icon name="ultra" size={16} /></span></HostStrip>
    </Viewer>
    <PowerMenu>
      <button type="button"><Icon name="moon" size={8} />Sleep</button>
      <button type="button"><Icon name="power" size={8} />Shut down</button>
      <button type="button"><Icon name="restart" size={8} />Restart</button>
    </PowerMenu>
    <Arrow x={29} y={370} /><Cursor x={73} y={392} />
  </Shot>
);

export default function App() {
  return (
    <>
      <Global />
      <Collage><ShotOne /><ShotTwo /><ShotThree /><ShotFour /><ShotFive /></Collage>
    </>
  );
}
